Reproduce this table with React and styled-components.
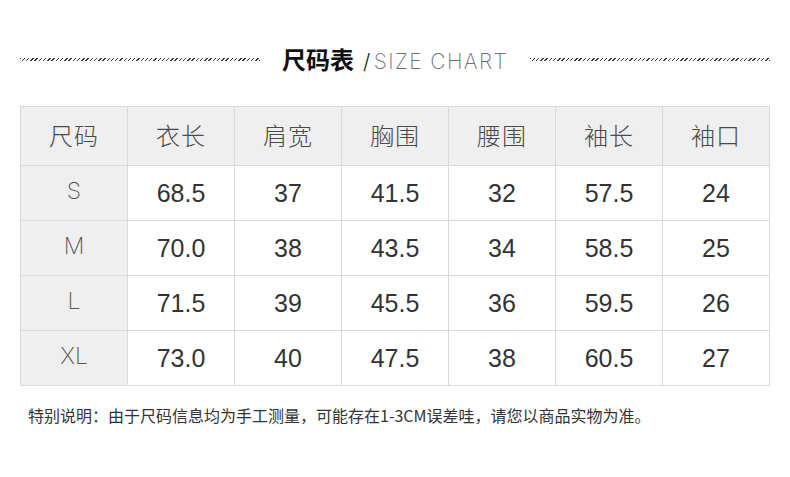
import styled, { createGlobalStyle } from "styled-components";

const GlobalStyle = createGlobalStyle`
  html, body {
    margin: 0;
    padding: 0;
    background: #ffffff;
  }
`;

const Page = styled.main`
  width: 790px;
  height: 477px;
  box-sizing: border-box;
  padding: 41px 20px 0 20px;
  background: #ffffff;
  font-family: "Noto Sans CJK SC", "Liberation Sans", sans-serif;
`;

const TitleBar = styled.div`
  display: flex;
  align-items: center;
  gap: 22px;
  height: 34px;
`;

const Hatch = styled.div`
  flex: 1;
  height: 3px;
  margin-top: 2px;
  background: repeating-linear-gradient(
    135deg,
    #3a3a3a 0 1px,
    transparent 1px 3px
  );
`;

const Title = styled.h1`
  margin: 0;
  display: flex;
  align-items: baseline;
  white-space: nowrap;
  font-weight: normal;
`;

const TitleCn = styled.span`
  font-family: "Noto Sans CJK SC", sans-serif;
  font-size: 24px;
  font-weight: 700;
  color: #111111;
`;

const TitleEn = styled.span`
  font-family: "Inter", "Liberation Sans", sans-serif;
  font-size: 21px;
  font-weight: 200;
  color: #6e6e6e;
  letter-spacing: 1.4px;
  margin-left: 9px;
`;

const Slash = styled.span`
  color: #222222;
  font-weight: 300;
  margin-right: 2px;
`;

const Table = styled.table`
  margin-top: 31px;
  width: 750px;
  border-collapse: collapse;
  table-layout: fixed;
`;

const Row = styled.tr`
  height: ${(p) => (p.$head ? "59px" : "55px")};
`;

const Cell = styled.td`
  border: 1px solid #d9d9d9;
  padding: 0;
  text-align: center;
  vertical-align: middle;
  background: ${(p) => (p.$shade ? "#efefef" : "#ffffff")};
  color: #333333;
  font-family: "Liberation Sans", Arial, sans-serif;
  font-size: 25px;
  line-height: 1;
`;

const HeadCell = styled(Cell)`
  font-family: "Noto Sans CJK SC", sans-serif;
  font-size: 24px;
  font-weight: 300;
  color: #4a4a4a;
  letter-spacing: 1px;
  padding-bottom: 2px;
`;

const SizeCell = styled(Cell)`
  font-family: "Inter", "Liberation Sans", sans-serif;
  font-size: 23px;
  font-weight: 200;
  color: #555555;
  padding-bottom: 3px;
`;

const Note = styled.p`
  margin: 17px 0 0 8px;
  font-family: "Noto Sans CJK SC", sans-serif;
  font-size: 16px;
  color: #333333;
  white-space: nowrap;
`;

const heads = ["尺码", "衣长", "肩宽", "胸围", "腰围", "袖长", "袖口"];

const rows = [
  ["S", "68.5", "37", "41.5", "32", "57.5", "24"],
  ["M", "70.0", "38", "43.5", "34", "58.5", "25"],
  ["L", "71.5", "39", "45.5", "36", "59.5", "26"],
  ["XL", "73.0", "40", "47.5", "38", "60.5", "27"],
];

export default function App() {
  return (
    <>
      <GlobalStyle />
      <Page>
        <TitleBar>
          <Hatch />
          <Title>
            <TitleCn>尺码表</TitleCn>
            <TitleEn>
              <Slash>/</Slash>SIZE CHART
            </TitleEn>
          </Title>
          <Hatch />
        </TitleBar>

        <Table>
          <tbody>
            <Row $head>
              {heads.map((h) => (
                <HeadCell as="th" key={h} $shade>
                  {h}
                </HeadCell>
              ))}
            </Row>
            {rows.map(([size, ...vals]) => (
              <Row key={size}>
                <SizeCell $shade>{size}</SizeCell>
                {vals.map((v, i) => (
                  <Cell key={i}>{v}</Cell>
                ))}
              </Row>
            ))}
          </tbody>
        </Table>

        <Note>特别说明：由于尺码信息均为手工测量，可能存在1-3CM误差哇，请您以商品实物为准。</Note>
      </Page>
    </>
  );
}
